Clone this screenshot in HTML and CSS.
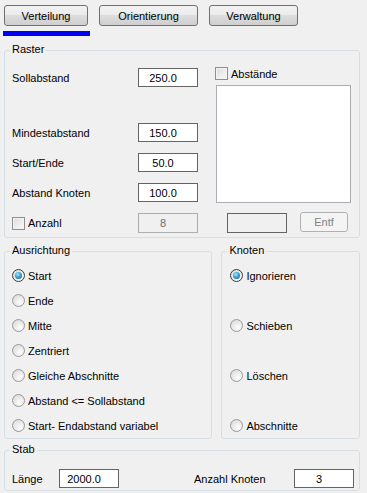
FILE: index.html
```html
<!DOCTYPE html>
<html lang="de">
  <head>
    <meta charset="UTF-8" />
    <meta name="viewport" content="width=device-width, initial-scale=1.0" />
    <link rel="stylesheet" href="styles.css">
    <title>Verteilung</title>
  </head>
  <body>
    <div class="tabs">
      <button class="tab tab-verteilung">Verteilung</button>
      <button class="tab tab-orientierung">Orientierung</button>
      <button class="tab tab-verwaltung">Verwaltung</button>
    </div>
    <div class="tab-indicator"></div>

    <div class="content">
      <div class="group raster">
        <span class="group-title">Raster</span>
        <div class="fields">
          <div class="field">
            <span class="field-label">Sollabstand</span>
            <input class="num" type="text" value="250.0">
          </div>
          <div class="field far">
            <span class="field-label">Mindestabstand</span>
            <input class="num" type="text" value="150.0">
          </div>
          <div class="field">
            <span class="field-label">Start/Ende</span>
            <input class="num" type="text" value="50.0">
          </div>
          <div class="field">
            <span class="field-label">Abstand Knoten</span>
            <input class="num" type="text" value="100.0">
          </div>
          <div class="field tall">
            <span class="field-label"><span class="check"></span>Anzahl</span>
            <input class="num" type="text" value="8" disabled>
          </div>
        </div>
        <div class="side">
          <div class="check-row"><span class="check"></span>Abstände</div>
          <div class="list"></div>
          <div class="side-bottom">
            <input class="plain" type="text">
            <button class="small-btn" disabled>Entf</button>
          </div>
        </div>
      </div>

      <div class="row2">
        <div class="group ausrichtung">
          <span class="group-title">Ausrichtung</span>
          <div class="option"><span class="radio on"></span>Start</div>
          <div class="option"><span class="radio"></span>Ende</div>
          <div class="option"><span class="radio"></span>Mitte</div>
          <div class="option"><span class="radio"></span>Zentriert</div>
          <div class="option"><span class="radio"></span>Gleiche Abschnitte</div>
          <div class="option"><span class="radio"></span>Abstand &lt;= Sollabstand</div>
          <div class="option"><span class="radio"></span>Start- Endabstand variabel</div>
        </div>
        <div class="group knoten">
          <span class="group-title">Knoten</span>
          <div class="option"><span class="radio on"></span>Ignorieren</div>
          <div class="option"><span class="radio"></span>Schieben</div>
          <div class="option"><span class="radio"></span>Löschen</div>
          <div class="option"><span class="radio"></span>Abschnitte</div>
        </div>
      </div>

      <div class="group stab">
        <span class="group-title">Stab</span>
        <span class="stab-label">Länge</span>
        <input class="num" type="text" value="2000.0">
        <span class="stab-label count">Anzahl Knoten</span>
        <input class="num" type="text" value="3">
      </div>
    </div>
  </body>
</html>
```

FILE: styles.css
```css
body {
  margin: 0;
  font-family: "Liberation Sans", Arial, sans-serif;
  font-size: 11px;
  color: #000;
  background-color: #f0f0f0;
}

.tabs {
  display: flex;
  gap: 11px;
  padding: 5px 0 0 4px;
}
.tab {
  height: 21px;
  padding: 0;
  font: inherit;
  color: #000;
  border: 1px solid #707070;
  border-radius: 3px;
  background: linear-gradient(#f2f2f2 0%, #ebebeb 50%, #dddddd 50%, #cfcfcf 100%);
}
.tab-verteilung { width: 84px; }
.tab-orientierung { width: 99px; }
.tab-verwaltung { width: 89px; }

.tab-indicator {
  width: 87px;
  height: 5px;
  margin: 5px 0 0 3px;
  background-color: #0000f5;
}

.content {
  padding: 0 7px 0 4px;
}

.group {
  position: relative;
  box-sizing: border-box;
  border: 1px solid #d5dfe5;
  border-radius: 3px;
}
.group-title {
  position: absolute;
  top: -8px;
  left: 5px;
  padding: 0 2px;
  line-height: 13px;
  background-color: #f0f0f0;
}

input {
  box-sizing: border-box;
  margin: 0;
  font: inherit;
  color: #000;
  background: #fff;
  border: 1px solid #646464;
  outline: none;
}
.num {
  width: 60px;
  height: 19px;
  padding: 0 10px 0 0;
  text-align: center;
}
.num:disabled {
  height: 20px;
  color: #6d6d6d;
  background: #f0f0f0;
  border-color: #adadad;
}

.check {
  display: inline-block;
  box-sizing: border-box;
  width: 13px;
  height: 13px;
  margin-right: 3px;
  vertical-align: middle;
  border: 1px solid #8e8f8f;
  background: linear-gradient(135deg, #dcdcdc, #fbfbfb);
  box-shadow: inset 0 0 0 1px #f4f4f4;
}

/* Raster */
.raster {
  display: flex;
  height: 188px;
  margin-top: 14px;
  padding: 17px 0 0 7px;
}
.fields {
  width: 186px;
}
.field {
  display: flex;
  align-items: center;
  height: 19px;
  margin-top: 11px;
}
.field:first-child { margin-top: 0; }
.field.far { margin-top: 36px; }
.field.tall { height: 20px; }
.field-label {
  display: flex;
  align-items: center;
  width: 126px;
}

.side {
  display: flex;
  flex-direction: column;
  width: 135px;
  margin: -1px 0 0 18px;
}
.check-row {
  display: flex;
  align-items: center;
  height: 13px;
  margin-left: -1px;
}
.list {
  box-sizing: border-box;
  height: 118px;
  margin-top: 5px;
  background: #fff;
  border: 1px solid #abadb3;
}
.side-bottom {
  display: flex;
  align-items: flex-start;
  gap: 13px;
  margin-top: 9px;
  padding-left: 11px;
}
.plain {
  width: 60px;
  height: 20px;
  margin-top: 1px;
  background: #f0f0f0;
}
.small-btn {
  width: 48px;
  height: 20px;
  padding: 0;
  font: inherit;
  color: #838383;
  background: #f4f4f4;
  border: 1px solid #adb2b5;
  border-radius: 3px;
}

/* Ausrichtung / Knoten */
.row2 {
  display: flex;
  gap: 9px;
  margin-top: 13px;
}
.ausrichtung,
.knoten {
  display: flex;
  flex-direction: column;
  height: 188px;
  padding-top: 17px;
}
.ausrichtung {
  width: 209px;
  padding-left: 7px;
  gap: 12px;
}
.knoten {
  width: 139px;
  padding-left: 8px;
  gap: 37px;
}
.option {
  display: flex;
  align-items: center;
  height: 13px;
}
.radio {
  position: relative;
  box-sizing: border-box;
  width: 13px;
  height: 13px;
  margin-right: 3px;
  border-radius: 50%;
  border: 1px solid #9a9a9a;
  background: radial-gradient(circle at 65% 70%, #fafafa 10%, #d8d8d8 90%);
}
.radio.on {
  border-color: #3c3c3c;
}
.radio.on::after {
  content: "";
  position: absolute;
  top: 2px;
  left: 2px;
  width: 7px;
  height: 7px;
  border-radius: 50%;
  background: radial-gradient(circle at 40% 35%, #a8e6ff 0%, #3ea3d8 45%, #11507f 100%);
}

/* Stab */
.stab {
  display: flex;
  align-items: center;
  height: 41px;
  margin-top: 11px;
  padding: 16px 0 0 7px;
}
.stab-label {
  width: 47px;
}
.stab-label.count {
  width: 100px;
  margin-left: 75px;
}
```
